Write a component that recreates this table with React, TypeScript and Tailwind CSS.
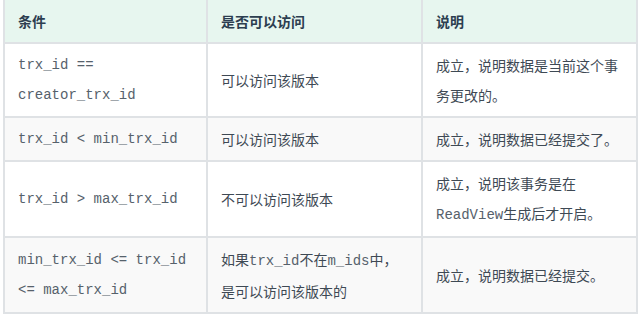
const code = "font-['Liberation_Mono',monospace] text-[#56616b]";

const rows: { cond: React.ReactNode; access: React.ReactNode; note: React.ReactNode }[] = [
  {
    cond: 'trx_id == creator_trx_id',
    access: '可以访问该版本',
    note: '成立，说明数据是当前这个事务更改的。',
  },
  {
    cond: 'trx_id < min_trx_id',
    access: '可以访问该版本',
    note: '成立，说明数据已经提交了。',
  },
  {
    cond: 'trx_id > max_trx_id',
    access: '不可以访问该版本',
    note: (
      <>
        成立，说明该事务是在<code className={code}>ReadView</code>生成后才开启。
      </>
    ),
  },
  {
    cond: 'min_trx_id <= trx_id <= max_trx_id',
    access: (
      <>
        如果<code className={code}>trx_id</code>不在
        <code className={code}>m_ids</code>中，
        <br />
        是可以访问该版本的
      </>
    ),
    note: '成立，说明数据已经提交。',
  },
];

export default function App() {
  return (
    <div className="w-[642px] h-[315px] bg-white pl-[3px] overflow-hidden font-['Noto_Sans_CJK_SC',sans-serif] text-[14px] text-[#3e4954]">
      <table className="w-[635px] table-fixed border-collapse">
        <colgroup>
          <col className="w-[203px]" />
          <col className="w-[215px]" />
          <col />
        </colgroup>
        <thead>
          <tr className="bg-[#e7f6ef]">
            {['条件', '是否可以访问', '说明'].map((h) => (
              <th
                key={h}
                className="border-2 border-t-0 border-[#dfe2e5] px-[13px] py-[6px] text-left font-bold leading-[30px] text-[#2c3e50]"
              >
                {h}
              </th>
            ))}
          </tr>
        </thead>
        <tbody>
          {rows.map((r, i) => (
            <tr key={i} className={i % 2 === 1 ? 'bg-[#f9f9f9]' : 'bg-white'}>
              <td className={`border-2 border-[#dfe2e5] px-[13px] py-[6px] leading-[30px] ${code}`}>{r.cond}</td>
              <td className="border-2 border-[#dfe2e5] px-[13px] py-[6px] leading-[30px]">{r.access}</td>
              <td className="border-2 border-[#dfe2e5] px-[13px] py-[6px] leading-[30px]">{r.note}</td>
            </tr>
          ))}
        </tbody>
      </table>
    </div>
  );
}
